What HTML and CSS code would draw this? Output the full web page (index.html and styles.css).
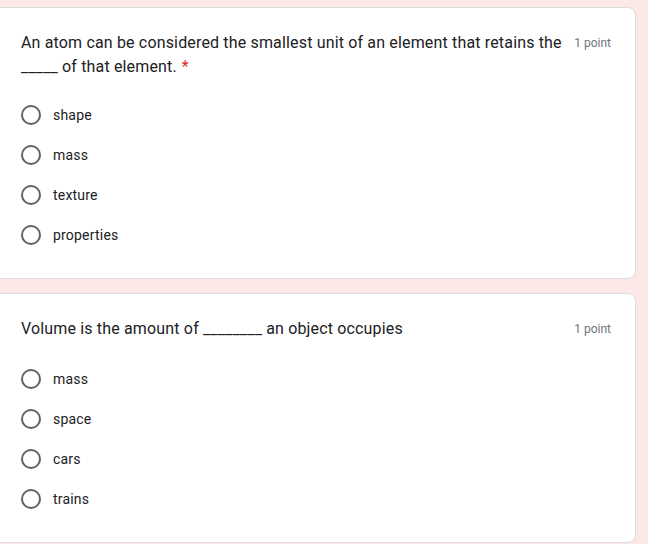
FILE: index.html
```html
<!DOCTYPE html>
<html lang="en">
<head>
<meta charset="utf-8">
<title>Quiz</title>
<link rel="stylesheet" href="styles.css">
</head>
<body>
<main class="form">
  <section class="card">
    <div class="q-head">
      <div class="q-title"><span class="q-text">An atom can be considered the smallest unit of an element that retains the _____ of that element.</span><span class="req">*</span></div>
      <div class="q-points">1 point</div>
    </div>
    <ul class="options">
      <li class="option"><span class="radio"></span><span class="label">shape</span></li>
      <li class="option"><span class="radio"></span><span class="label">mass</span></li>
      <li class="option"><span class="radio"></span><span class="label">texture</span></li>
      <li class="option"><span class="radio"></span><span class="label">properties</span></li>
    </ul>
  </section>
  <section class="card">
    <div class="q-head">
      <div class="q-title"><span class="q-text">Volume is the amount of ________ an object occupies</span></div>
      <div class="q-points">1 point</div>
    </div>
    <ul class="options">
      <li class="option"><span class="radio"></span><span class="label">mass</span></li>
      <li class="option"><span class="radio"></span><span class="label">space</span></li>
      <li class="option"><span class="radio"></span><span class="label">cars</span></li>
      <li class="option"><span class="radio"></span><span class="label">trains</span></li>
    </ul>
  </section>
</main>
</body>
</html>
```

FILE: styles.css
```css
* { box-sizing: border-box; }
html, body { margin: 0; padding: 0; }
body {
  background: #fce8e6;
  font-family: Roboto, "Liberation Sans", Arial, sans-serif;
  color: #202124;
  width: 648px;
  height: 544px;
  overflow: hidden;
}
.form {
  padding-top: 7px;
  margin-left: -10px;
  width: 646px;
  display: flex;
  flex-direction: column;
  gap: 14px;
}
.card {
  background: #fff;
  border: 1px solid #dadce0;
  border-radius: 8px;
  padding: 23px 24px 23px 30px;
}
.q-head {
  display: flex;
  align-items: flex-start;
  min-height: 26px;
}
.q-title {
  flex: 1;
  font-size: 16px;
  line-height: 24px;
  letter-spacing: 0.16px;
  color: #202124;
}
.req {
  color: #d93025;
  margin-left: 5px;
}
.q-points {
  margin-left: 12px;
  font-size: 12px;
  line-height: 24px;
  color: #70757a;
  white-space: nowrap;
}
.options {
  list-style: none;
  margin: 16px 0 0;
  padding: 0;
}
.option {
  display: flex;
  align-items: center;
  height: 40px;
  gap: 12px;
}
.radio {
  width: 20px;
  height: 20px;
  border: 2px solid #5f6368;
  border-radius: 50%;
  flex: none;
}
.label {
  font-size: 14px;
  line-height: 20px;
  letter-spacing: 0.2px;
  color: #202124;
}
```
